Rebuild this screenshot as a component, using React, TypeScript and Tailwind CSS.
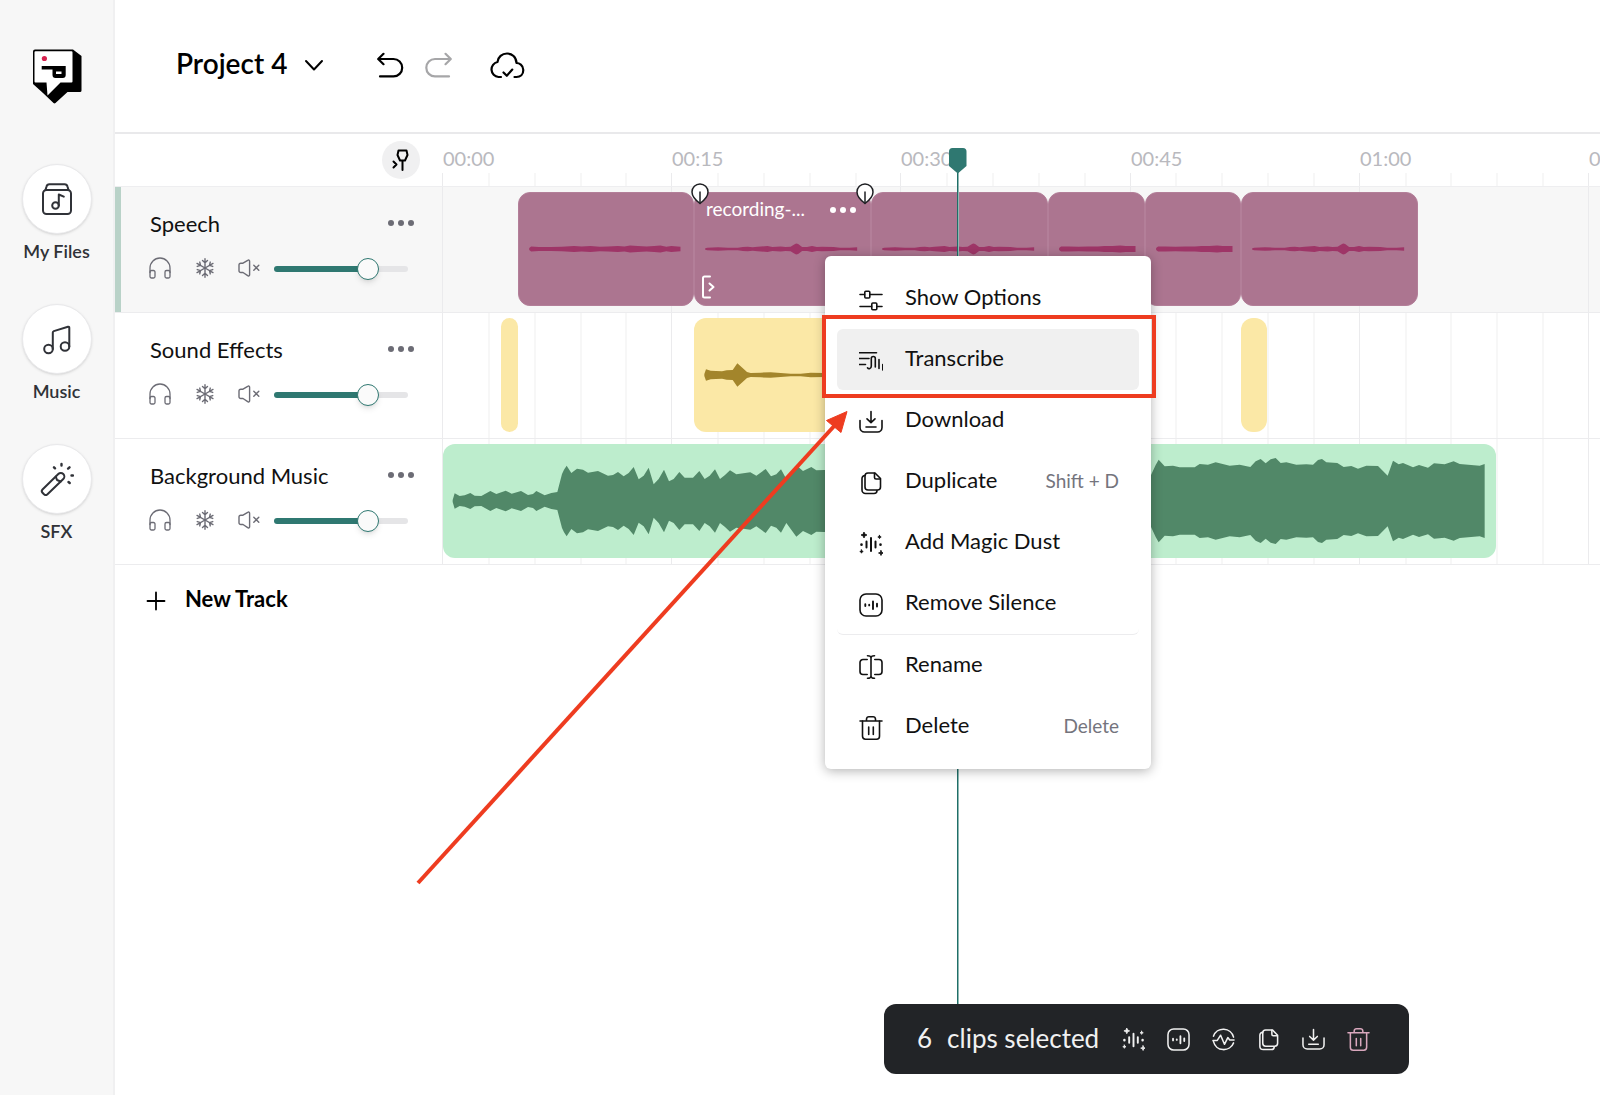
import { type ReactNode } from 'react';
import clsx from 'clsx';

const TICK_COUNT = 26;
const tickLeft = (index: number) => Math.round((index * 1146) / 25);

const RULER_LABELS = ['00:00', '00:15', '00:30', '00:45', '01:00', '01:15'];

type Point = [number, number];

// Waveform samples: [x, amplitude], three units to a pixel
const SPEECH_FLAT: Point[] = [
    [31, 3], [37, 8], [60, 6], [97, 6], [130, 7], [167, 9], [190, 8], [217, 9], [245, 7], [270, 8], [300, 9],
    [320, 8], [337, 11], [360, 9], [387, 8], [410, 9], [429, 11], [447, 7], [462, 9], [490, 7],
];
const SPEECH_PEAK: Point[] = [
    [31, 2], [37, 4], [70, 5], [100, 4], [130, 4], [145, 6], [160, 7], [175, 5], [190, 7], [220, 9], [235, 6],
    [260, 8], [275, 6], [290, 7], [301, 14], [307, 17], [313, 15], [325, 6], [340, 6], [355, 9], [370, 6],
    [385, 7], [420, 6], [440, 4], [470, 4], [492, 5],
];
const SPEECH_SHORT: Point[] = [
    [31, 3], [37, 8], [60, 8], [90, 7], [120, 8], [150, 8], [170, 9], [195, 9], [218, 11], [235, 9], [265, 9],
];
const SFX_WAVE: Point[] = [
    [31, 3], [36, 17], [50, 13], [66, 12], [84, 11], [98, 14], [116, 15], [130, 35], [145, 22], [159, 9], [170, 6],
    [200, 7], [230, 8], [290, 4], [320, 4], [350, 7], [390, 6], [500, 4],
];
const MUSIC_WAVE: Point[] = [
    [29, 3], [35, 23], [50, 15], [65, 17], [82, 24], [95, 16], [115, 15], [142, 30], [160, 21], [188, 31],
    [206, 22], [234, 30], [255, 18], [270, 21], [280, 30], [305, 17], [325, 24], [343, 27], [357, 81], [363, 94],
    [371, 106], [385, 84], [402, 97], [420, 94], [435, 85], [465, 90], [495, 76], [510, 78], [525, 87],
    [542, 74], [557, 84], [572, 102], [587, 65], [602, 76], [617, 100], [632, 50], [647, 66], [663, 94],
    [678, 59], [692, 66], [709, 87], [725, 70], [750, 70], [769, 90], [785, 66], [800, 76], [816, 95],
    [831, 66], [846, 78], [861, 92], [880, 80], [922, 86], [940, 76], [968, 96], [984, 74], [1000, 80],
    [1014, 95], [1030, 66], [1060, 107], [1080, 90], [1105, 102], [1120, 92], [1144, 93], [2090, 60],
    [2123, 76], [2138, 108], [2147, 124], [2165, 104], [2190, 106], [2210, 101], [2255, 101], [2270, 111],
    [2295, 109], [2318, 116], [2360, 106], [2390, 109], [2422, 102], [2438, 119], [2453, 126], [2468, 113],
    [2483, 125], [2498, 129], [2513, 114], [2530, 116], [2560, 109], [2590, 110], [2610, 109], [2625, 123],
    [2637, 126], [2650, 116], [2683, 114], [2702, 102], [2725, 105], [2745, 97], [2770, 106], [2805, 105],
    [2834, 76], [2850, 121], [2867, 110], [2880, 114], [2910, 101], [2928, 108], [2955, 100], [2973, 113],
    [3005, 110], [3032, 119], [3050, 111], [3110, 106], [3125, 111],
];

interface WaveformProps {
    points: Point[];
    width: number;
    className: string;
}

function Waveform({ points, width, className }: WaveformProps) {
    const top = points.map(([x, a]) => `${x},${171 - a}`);
    const bottom = [...points].reverse().map(([x, a]) => `${x},${171 + a}`);
    return (
        <svg
            viewBox={`0 0 ${width * 3} 342`}
            preserveAspectRatio="none"
            className={clsx('absolute inset-0 h-full w-full', className)}
            aria-hidden="true"
        >
            <polygon points={[...top, ...bottom].join(' ')} fill="currentColor" />
        </svg>
    );
}

interface IconProps {
    className?: string;
}

function Logo() {
    return (
        <svg viewBox="0 0 50 55" className="h-[55px] w-[50px]" role="img" aria-label="Home">
            <path d="M3 .500h38l8.500 6.500v34.500a1.500 1.500 0 0 1-1.500 1.500H35.500L23.500 54a1.500 1.500 0 0 1-2 0L11 44 1 35V2.500a2 2 0 0 1 2-2z" fill="#000" />
            <path d="M3.500 2.200h36a1 1 0 0 1 1 1v29.300a1 1 0 0 1-1 1H28.500L15.500 46.500 14.500 33.500h-11a1 1 0 0 1-1-1V3.200a1 1 0 0 1 1-1z" fill="#fff" />
            <circle cx="12.400" cy="9.500" r="2.600" fill="#d6214e" />
            <path d="M9.700 17h24v9a3 3 0 0 1-3 3h-7.200a3 3 0 0 1-3-3V20.500H9.700z" fill="#000" />
            <path d="M24 22.500h5.500v2.500H24z" fill="#fff" />
        </svg>
    );
}

function Svg({ className, size = 24, width = 1.6, children }: IconProps & { size?: number; width?: number; children: ReactNode }) {
    return (
        <svg
            viewBox={`0 0 ${size} ${size}`}
            className={className}
            fill="none"
            stroke="currentColor"
            strokeWidth={width}
            strokeLinecap="round"
            strokeLinejoin="round"
            aria-hidden="true"
        >
            {children}
        </svg>
    );
}

function FilesIcon() {
    return (
        <Svg size={32} width={2} className="h-8 w-8">
            <rect x="2" y="7" width="28" height="24" rx="3.500" />
            <path d="M4.500 7l1-3.500A3 3 0 0 1 8.400 1.200h15.200a3 3 0 0 1 2.900 2.300l1 3.500" />
            <circle cx="14.500" cy="22.500" r="3.300" />
            <path d="M17.800 22.500V11.500l5 2.200" />
        </Svg>
    );
}

function MusicIcon() {
    return (
        <Svg size={32} width={2} className="h-8 w-8">
            <circle cx="7.500" cy="26" r="4.300" />
            <circle cx="24" cy="23.500" r="4.300" />
            <path d="M11.800 26V9.500a1.500 1.500 0 0 1 1-1.400L27 3.700a1 1 0 0 1 1.300 1V23.500" />
        </Svg>
    );
}

function WandIcon() {
    return (
        <Svg size={34} width={2} className="h-[34px] w-[34px]">
            <path d="M2.500 27.500L18.300 12a3.500 3.500 0 0 1 5 5L7.500 32.300a2.500 2.500 0 0 1-3.500 0l-1.500-1.600a2.300 2.300 0 0 1 0-3.200z" />
            <path d="M15.800 14.600l1.200 3.400 3.600 1.500" />
            <path d="M14 5.300l1 1M21.500 2v1.500M29.500 5.300l-1.400 1.300M31.500 13.500h1.500M28.500 20l1.200 1" strokeWidth="2.400" />
        </Svg>
    );
}

function HeadphonesIcon() {
    return (
        <Svg size={22} width={1.3} className="h-[22px] w-[22px]">
            <path d="M1 15.500V11a10 10 0 0 1 20 0v4.500" />
            <rect x="1" y="13.500" width="5" height="7.500" rx="1.500" />
            <rect x="16" y="13.500" width="5" height="7.500" rx="1.500" />
        </Svg>
    );
}

function SnowflakeIcon() {
    return (
        <Svg size={20} width={1.4} className="h-5 w-5">
            {[0, 60, 120, 180, 240, 300].map((angle) => (
                <path key={angle} d="M10 10V.800M7.500 2.500L10 4.800l2.500-2.300" transform={`rotate(${angle} 10 10)`} />
            ))}
        </Svg>
    );
}

function MuteIcon() {
    return (
        <Svg size={22} width={1.4} className="h-[22px] w-[22px]">
            <path d="M1 8a1.800 1.800 0 0 1 1.800-1.800H5L9.700 3.300a1.200 1.200 0 0 1 1.900 1v13.400a1.200 1.200 0 0 1-1.900 1L5 15.500H2.800A1.800 1.800 0 0 1 1 13.700z" />
            <path d="M15.800 8.200l5 5M20.800 8.200l-5 5" />
        </Svg>
    );
}

function MoreDots() {
    return (
        <svg viewBox="0 0 26 6" className="h-1.5 w-[26px]" fill="currentColor" aria-hidden="true">
            <circle cx="3" cy="3" r="3" />
            <circle cx="13" cy="3" r="3" />
            <circle cx="23" cy="3" r="3" />
        </svg>
    );
}

function OptionsIcon({ className }: IconProps) {
    return (
        <Svg className={className}>
            <path d="M1 6.500h4.500M11 6.500h12M1 18.500h11.500M18 18.500h5" />
            <rect x="5.800" y="3.200" width="5" height="6.800" rx="1" />
            <rect x="12.800" y="15" width="5" height="6.800" rx="1" />
        </Svg>
    );
}

function TranscribeIcon({ className }: IconProps) {
    return (
        <Svg className={className}>
            <path d="M0 3.800h17.500M0 9.500h10M0 15.500h6.500" />
            <path d="M8.500 18.800c1 1.500 3.800 1.200 3.800-1.800V9.500c0-2.600 4-2.600 4 0V18M20 10.500v9M23.800 15.500V21" />
        </Svg>
    );
}

function DownloadIcon({ className }: IconProps) {
    return (
        <Svg className={className}>
            <path d="M12 1.500v10.800M8 8.800l4 3.800 4-3.800M7 17h10" />
            <path d="M1 10.500v7A4.500 4.500 0 0 0 5.500 22h13a4.500 4.500 0 0 0 4.500-4.500v-7" />
        </Svg>
    );
}

function DuplicateIcon({ className }: IconProps) {
    return (
        <Svg className={className}>
            <path d="M9 2h7l5.500 5.500V16a3 3 0 0 1-3 3H9a3 3 0 0 1-3-3V5a3 3 0 0 1 3-3z" />
            <path d="M15.500 2.300V6.500a1.500 1.500 0 0 0 1.500 1.500h4.200" />
            <path d="M6 4.500A3 3 0 0 0 3 7.500v11.500A3.500 3.500 0 0 0 6.500 22.500H15a3 3 0 0 0 3-3" />
        </Svg>
    );
}

function MagicIcon({ className }: IconProps) {
    return (
        <Svg className={className}>
            <path d="M12 6v13M7.500 9.500v6M16.500 9.500v6" strokeWidth="2" />
            <path d="M2.500 12.500v.200M21.500 12.500v.200" strokeWidth="2.600" />
            <path
                d="M5 0l.900 2.100L8 3l-2.100.900L5 6l-.900-2.100L2 3l2.100-.900zM20.500 3.300l.500 1.200 1.200.500-1.200.500-.500 1.200-.500-1.200-1.200-.500 1.200-.500zM2.500 17.800l.500 1.200 1.200.500L3 20l-.500 1.200L2 20l-1.200-.500L2 19zM22 18.500l.700 1.800 1.800.700-1.800.700L22 23.500l-.700-1.800-1.800-.700 1.800-.700z"
                fill="currentColor"
                strokeWidth=".8"
            />
        </Svg>
    );
}

function SilenceIcon({ className }: IconProps) {
    return (
        <Svg className={className}>
            <rect x="1" y="1" width="22" height="22" rx="6" />
            <path d="M6.300 11.200v1.800M10.200 11.800v.600M14 8.500v7.500M18 10.800v2.800" strokeWidth="1.900" />
        </Svg>
    );
}

function RenameIcon({ className }: IconProps) {
    return (
        <Svg className={className}>
            <path d="M8.500.800c2 0 3.500.600 3.500 2v18.400c0 1.400-1.500 2-3.500 2M15.500.800c-2 0-3.500.600-3.500 2M15.500 23.200c-2 0-3.500-.600-3.500-2" />
            <path d="M8.200 4.500H4A3 3 0 0 0 1 7.500v9a3 3 0 0 0 3 3h4.200M15.800 4.500H20a3 3 0 0 1 3 3v9a3 3 0 0 1-3 3h-4.200" />
        </Svg>
    );
}

function TrashIcon({ className }: IconProps) {
    return (
        <Svg className={className}>
            <path d="M1 5h22M7.500 4.800V3A2.500 2.500 0 0 1 10 .800h4A2.500 2.500 0 0 1 16.500 3v1.800M9.700 11v7.500M14.300 11v7.500" />
            <path d="M3.500 5v15.300A3 3 0 0 0 6.500 23.200h11a3 3 0 0 0 3-3V5" />
        </Svg>
    );
}

function PulseIcon({ className }: IconProps) {
    return (
        <Svg className={className}>
            <path d="M1.500 8.500A11 11 0 0 1 22.500 9.500M22.500 15.500A11 11 0 0 1 1.500 14" />
            <path d="M1 13h4.500l3.500-5.500 4 9.500 3.500-7 2 2.500H23" />
        </Svg>
    );
}

const NAV_ITEMS = [
    { label: 'My Files', icon: <FilesIcon /> },
    { label: 'Music', icon: <MusicIcon /> },
    { label: 'SFX', icon: <WandIcon /> },
];

function Sidebar() {
    return (
        <nav className="flex w-[115px] shrink-0 flex-col items-center border-r-2 border-[#f0f0f1] bg-[#f7f7f7] pt-[49px]">
            <a href="#home">
                <Logo />
            </a>
            <div className="mt-15 flex flex-col items-center gap-10">
                {NAV_ITEMS.map(({ label, icon }) => (
                    <button key={label} type="button" className="flex flex-col items-center gap-1 text-[#303238]">
                        <span className="flex h-[70px] w-[70px] items-center justify-center rounded-full border border-[#e9e9eb] bg-white shadow-sm">
                            {icon}
                        </span>
                        <span className="text-lg font-semibold leading-[26px]">{label}</span>
                    </button>
                ))}
            </div>
        </nav>
    );
}

function Header() {
    return (
        <header className="flex h-[134px] items-center border-b-2 border-[#e9e9eb] pb-1 pl-[61px]">
            <button type="button" className="flex w-[148px] items-center justify-between whitespace-nowrap">
                <span className="-mt-0.5 text-[28px] font-semibold leading-9">Project 4</span>
                <Svg size={20} width={2} className="mt-0.5 h-5 w-5">
                    <path d="M2 6l8 8.500L18 6" />
                </Svg>
            </button>
            <button type="button" aria-label="Undo" className="ml-[53px] mt-1">
                <Svg size={28} width={2.2} className="h-7 w-7">
                    <path d="M6.500 1.800L1.200 7l5.300 5.200M1.500 7H16.500a8.700 8.700 0 0 1 0 17.400H3" />
                </Svg>
            </button>
            <button type="button" aria-label="Redo" className="ml-5 mt-1 text-[#a6a6a8]">
                <Svg size={28} width={2.2} className="h-7 w-7">
                    <path d="M20.500 1.800L25.800 7l-5.300 5.200M25.500 7H10a8.700 8.700 0 0 0 0 17.400H24" />
                </Svg>
            </button>
            <button type="button" aria-label="Saved" className="ml-9 mt-1">
                <Svg size={36} width={2.2} className="h-9 w-9">
                    <path d="M12 29H9.500a7.600 7.600 0 0 1-1-15C9 9 13 5.500 18 5.500s9.300 3.700 9.500 9.500c2.500 0 6.800 2 6.800 7 0 4.500-3 7-6.800 7h-2" />
                    <path d="M14.500 24.500l3.300 3.300 5.500-6.200" />
                </Svg>
            </button>
        </header>
    );
}

function GridLines() {
    return (
        <div className="absolute inset-0 overflow-hidden">
            {Array.from({ length: TICK_COUNT }, (_, i) => (
                <div
                    key={i}
                    className={clsx('absolute inset-y-0', i % 5 === 0 ? 'w-px bg-[#ebebed]' : 'w-0.5 bg-[#f7f7f7]')}
                    style={{ left: tickLeft(i) }}
                />
            ))}
        </div>
    );
}

function Ruler() {
    return (
        <div className="flex h-[53px] border-b border-[#eeeef0]">
            <div className="flex w-[327px] shrink-0 items-center justify-end pr-[22px]">
                <button
                    type="button"
                    aria-label="Add marker"
                    className="flex h-[38px] w-[38px] items-center justify-center rounded-full bg-[#f0f0f1]"
                >
                    <Svg size={24} width={2} className="h-6 w-6">
                        <path d="M9.500 2.500h8l1 4.500-2.500 5.500h-5L8.500 7zM13.500 12.500V22M4.500 13.500l3 3-3 3" />
                    </Svg>
                </button>
            </div>
            <div className="relative flex-1">
                <div className="absolute inset-x-0 bottom-0 h-[13px]">
                    <GridLines />
                </div>
                <div className="absolute inset-0 overflow-hidden">
                    {RULER_LABELS.map((label, i) => (
                        <span
                            key={label}
                            className="absolute top-3 pl-px text-xl leading-6 text-[#b9b9be]"
                            style={{ left: tickLeft(i * 5) }}
                        >
                            {label}
                        </span>
                    ))}
                </div>
                <div className="absolute left-[515px] top-3.5 z-10 h-[871px] w-0.5 border-l border-[#1f6f68] bg-[#8fb8b3]" />
                <svg viewBox="0 0 18 26" className="absolute left-[507px] top-3.5 z-10 h-[26px] w-[18px]" aria-hidden="true">
                    <path d="M3.500 0h10.500a3.500 3.500 0 0 1 3.500 3.500V18l-8.700 7.500L0 18V3.500A3.500 3.500 0 0 1 3.500 0z" fill="#2f7871" />
                </svg>
            </div>
        </div>
    );
}

interface Clip {
    left: number;
    width: number;
    wave?: Point[];
    title?: string;
}

interface Track {
    name: string;
    active?: boolean;
    clipClass: string;
    waveClass: string;
    clips: Clip[];
}

const TRACKS: Track[] = [
    {
        name: 'Speech',
        active: true,
        clipClass: 'bg-[#ac7590] border border-[#b37f99] rounded-xl',
        waveClass: 'text-[#9e3567]',
        clips: [
            { left: 76, width: 176, wave: SPEECH_FLAT },
            { left: 252, width: 177, wave: SPEECH_PEAK, title: 'recording-...' },
            { left: 429, width: 177, wave: SPEECH_PEAK },
            { left: 606, width: 97, wave: SPEECH_SHORT },
            { left: 703, width: 96, wave: SPEECH_SHORT },
            { left: 799, width: 177, wave: SPEECH_PEAK },
        ],
    },
    {
        name: 'Sound Effects',
        clipClass: 'bg-[#fbe8a6] rounded-xl',
        waveClass: 'text-[#a3852b]',
        clips: [
            { left: 59, width: 17 },
            { left: 252, width: 177, wave: SFX_WAVE },
            { left: 799, width: 26 },
        ],
    },
    {
        name: 'Background Music',
        clipClass: 'bg-[#bdedcd] rounded-xl',
        waveClass: 'text-[#518868]',
        clips: [{ left: 1, width: 1053, wave: MUSIC_WAVE }],
    },
];

function TrimHandle({ className }: IconProps) {
    return (
        <svg viewBox="0 0 18 22" className={clsx('absolute z-10 h-[22px] w-[18px]', className)} aria-hidden="true">
            <path d="M9 20.500C5 17.500 1 13.500 1 9a8 8 0 0 1 16 0c0 4.500-4 8.500-8 11.500z" fill="#fff" stroke="#1e1f23" strokeWidth="1.500" />
            <path d="M9 8.500v12" stroke="#1e1f23" strokeWidth="1.500" />
        </svg>
    );
}

function TrackControls({ name, active }: { name: string; active?: boolean }) {
    return (
        <div
            className={clsx(
                'w-[327px] shrink-0 border-l-6 pl-7 pr-7 pt-[21px] text-[#6c6c75]',
                active ? 'border-[#b9d2c8]' : 'border-transparent',
            )}
        >
            <div className="flex items-start justify-between">
                <span className="pl-px text-[22px] leading-8 text-[#111]">{name}</span>
                <button type="button" aria-label={`${name} options`} className="mt-3">
                    <MoreDots />
                </button>
            </div>
            <div className="mt-4 flex items-center">
                <button type="button" aria-label={`Solo ${name}`}>
                    <HeadphonesIcon />
                </button>
                <button type="button" aria-label={`Freeze ${name}`} className="ml-6">
                    <SnowflakeIcon />
                </button>
                <button type="button" aria-label={`Mute ${name}`} className="ml-[23px]">
                    <MuteIcon />
                </button>
                <input
                    type="range"
                    aria-label={`${name} volume`}
                    defaultValue={74}
                    className="ml-3.5 mt-0.5 h-[22px] w-[134px] appearance-none bg-transparent [&::-webkit-slider-runnable-track]:h-1.5 [&::-webkit-slider-runnable-track]:rounded-full [&::-webkit-slider-runnable-track]:bg-[linear-gradient(to_right,#2f7871_70%,#e5e5e7_70%)] [&::-webkit-slider-thumb]:-mt-2 [&::-webkit-slider-thumb]:h-[22px] [&::-webkit-slider-thumb]:w-[22px] [&::-webkit-slider-thumb]:appearance-none [&::-webkit-slider-thumb]:rounded-full [&::-webkit-slider-thumb]:border-[1.5px] [&::-webkit-slider-thumb]:border-[#2f7871] [&::-webkit-slider-thumb]:bg-[#fafafa] [&::-webkit-slider-thumb]:shadow-md"
                />
            </div>
        </div>
    );
}

function TrackRow({ track }: { track: Track }) {
    return (
        <div className={clsx('flex h-[126px] border-b border-[#ececee]', track.active && 'bg-[#f7f7f7]')}>
            <TrackControls name={track.name} active={track.active} />
            <div className="relative flex-1">
                <GridLines />
                {track.clips.map((clip) => (
                    <div
                        key={clip.left}
                        className={clsx('absolute bottom-1.5 top-[5px] overflow-hidden', track.clipClass)}
                        style={{ left: clip.left, width: clip.width }}
                    >
                        {clip.wave && <Waveform points={clip.wave} width={clip.width} className={track.waveClass} />}
                        {clip.title && (
                            <div className="relative flex h-full flex-col justify-between pb-1.5 pl-[11px] pr-3.5 pt-1 text-white">
                                <div className="flex items-center justify-between">
                                    <span className="text-[19px] leading-6">{clip.title}</span>
                                    <button type="button" aria-label="Clip options" className="mt-0.5">
                                        <MoreDots />
                                    </button>
                                </div>
                                <Svg size={24} width={2} className="-ml-1.5 h-6 w-6">
                                    <path d="M10 1.500H4.500A1.500 1.500 0 0 0 3 3v18a1.500 1.500 0 0 0 1.500 1.500H10M9.500 8.500l4 3.500-4 3.500" />
                                </Svg>
                            </div>
                        )}
                    </div>
                ))}
                {track.active && (
                    <>
                        <TrimHandle className="-top-1 left-[249px]" />
                        <TrimHandle className="-top-1 left-[414px]" />
                    </>
                )}
            </div>
        </div>
    );
}

const MENU_ITEMS = [
    { label: 'Show Options', Icon: OptionsIcon },
    { label: 'Transcribe', Icon: TranscribeIcon, highlighted: true },
    { label: 'Download', Icon: DownloadIcon },
    { label: 'Duplicate', Icon: DuplicateIcon, shortcut: 'Shift + D' },
    { label: 'Add Magic Dust', Icon: MagicIcon },
    { label: 'Remove Silence', Icon: SilenceIcon, divider: true },
    { label: 'Rename', Icon: RenameIcon },
    { label: 'Delete', Icon: TrashIcon, shortcut: 'Delete' },
];

function ContextMenu() {
    return (
        <div
            role="menu"
            className="absolute left-[825px] top-[256px] z-20 w-[326px] rounded-md bg-white p-3 shadow-[0_2px_12px_rgba(0,0,0,0.3)]"
        >
            {MENU_ITEMS.map(({ label, Icon, highlighted, shortcut, divider }) => (
                <button
                    key={label}
                    type="button"
                    role="menuitem"
                    className={clsx(
                        'flex w-full items-center rounded-md pb-[3px] pl-[22px] pr-5 text-left text-[#111]',
                        highlighted && 'bg-[#f0f0f0]',
                        divider ? 'h-[62px] border-b border-[#ececee]' : 'h-[61px]',
                    )}
                >
                    <Icon className="mt-1.5 h-6 w-6 shrink-0" />
                    <span className="ml-[22px] flex-1 text-[22px] leading-8">{label}</span>
                    {shortcut && <span className="mt-0.5 text-[19px] leading-8 text-[#74747d]">{shortcut}</span>}
                </button>
            ))}
        </div>
    );
}

// Callout box and arrow pointing at the Transcribe entry
function Callout() {
    return (
        <div className="pointer-events-none">
            <div className="absolute left-[822px] top-[315px] z-30 h-[83px] w-[334px] border-4 border-[#ee3c20]" />
            <svg viewBox="0 0 440 480" className="absolute left-[412px] top-[408px] z-30 h-[480px] w-[440px]" aria-hidden="true">
                <path d="M6 475L424 16" stroke="#ee3c20" strokeWidth="4" />
                <path d="M435 3.500L414.500 12.500L429 24.500z" fill="#ee3c20" stroke="#ee3c20" strokeWidth="1" />
            </svg>
        </div>
    );
}

const SELECTION_ACTIONS = [
    { label: 'Add Magic Dust', Icon: MagicIcon },
    { label: 'Remove Silence', Icon: SilenceIcon },
    { label: 'Level audio', Icon: PulseIcon },
    { label: 'Duplicate', Icon: DuplicateIcon },
    { label: 'Download', Icon: DownloadIcon },
    { label: 'Delete', Icon: TrashIcon, danger: true },
];

function SelectionBar() {
    return (
        <div className="absolute bottom-[21px] left-[884px] z-20 flex h-[70px] w-[525px] items-center justify-between rounded-xl bg-[#222427] pl-[33px] pr-[39px] text-[#f1f1f1]">
            <p className="flex gap-[15px] whitespace-nowrap pb-0.5 text-[26px] leading-8">
                <span>6</span>
                <span>clips selected</span>
            </p>
            <div className="flex gap-[22px]">
                {SELECTION_ACTIONS.map(({ label, Icon, danger }) => (
                    <button key={label} type="button" aria-label={label} className={clsx(danger && 'text-[#d9a7bd]')}>
                        <Icon className="h-[23px] w-[23px]" />
                    </button>
                ))}
            </div>
        </div>
    );
}

export default function App() {
    return (
        <div className="relative flex min-h-screen overflow-hidden bg-white font-[Lato,'Open_Sans',sans-serif] text-black">
            <Sidebar />
            <main className="min-w-0 flex-1">
                <Header />
                <Ruler />
                {TRACKS.map((track) => (
                    <TrackRow key={track.name} track={track} />
                ))}
                <button type="button" className="ml-[31px] mt-[18px] flex items-center gap-[19px]">
                    <Svg size={20} width={1.8} className="mt-1 h-5 w-5">
                        <path d="M10 1.500v17M1.500 10h17" />
                    </Svg>
                    <span className="text-[22px] font-bold leading-8">New Track</span>
                </button>
            </main>
            <ContextMenu />
            <Callout />
            <SelectionBar />
        </div>
    );
}
